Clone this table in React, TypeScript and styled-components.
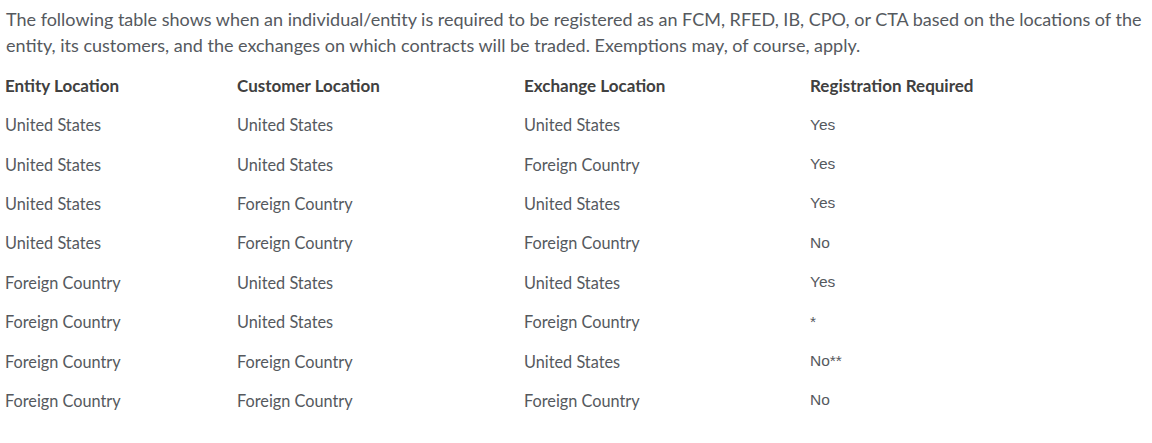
import React from "react";
import styled, { createGlobalStyle } from "styled-components";

const Global = createGlobalStyle`
  html, body { margin: 0; padding: 0; background: #fff; }
  body { font-family: "Lato", "Noto Sans", sans-serif; color: #555; }
`;

const Page = styled.div`
  padding: 0 6px 0 0;
`;

const Intro = styled.p`
  margin: 0;
  padding: 6px 0 0 6px;
  font-size: 18px;
  line-height: 26px;
  color: #55595e;
`;

const Table = styled.table`
  border-collapse: collapse;
  width: 100%;
  margin-top: 8px;
  table-layout: fixed;
`;

const Head = styled.th<{ $w: number }>`
  text-align: left;
  font-weight: 700;
  font-size: 17px;
  color: #404040;
  padding: 0 0 0 5px;
  height: 39px;
  width: ${(p) => `${p.$w}px`};
`;

const Cell = styled.td<{ $plain?: boolean }>`
  font-family: ${(p) => (p.$plain ? `"Liberation Sans", Arial, sans-serif` : `"Lato", "Noto Sans", sans-serif`)};
  font-size: ${(p) => (p.$plain ? "15.5px" : "16.3px")};
  color: #55595e;
  padding: 0 0 0 5px;
  height: 39.4px;
`;

const rows = [
  ["United States", "United States", "United States", "Yes"],
  ["United States", "United States", "Foreign Country", "Yes"],
  ["United States", "Foreign Country", "United States", "Yes"],
  ["United States", "Foreign Country", "Foreign Country", "No"],
  ["Foreign Country", "United States", "United States", "Yes"],
  ["Foreign Country", "United States", "Foreign Country", "*"],
  ["Foreign Country", "Foreign Country", "United States", "No**"],
  ["Foreign Country", "Foreign Country", "Foreign Country", "No"],
];

export default function App() {
  return (
    <Page>
      <Global />
      <Intro>
        The following table shows when an individual/entity is required to be registered as an FCM, RFED, IB, CPO, or CTA based on the locations of the entity, its customers, and the exchanges on which contracts will be traded. Exemptions may, of course, apply.
      </Intro>
      <Table>
        <thead>
          <tr>
            <Head $w={227}>Entity Location</Head>
            <Head $w={282}>Customer Location</Head>
            <Head $w={281}>Exchange Location</Head>
            <Head $w={336}>Registration Required</Head>
          </tr>
        </thead>
        <tbody>
          {rows.map((r, i) => (
            <tr key={i}>
              {r.map((c, j) => (
                <Cell key={j} $plain={j === 3}>{c}</Cell>
              ))}
            </tr>
          ))}
        </tbody>
      </Table>
    </Page>
  );
}
